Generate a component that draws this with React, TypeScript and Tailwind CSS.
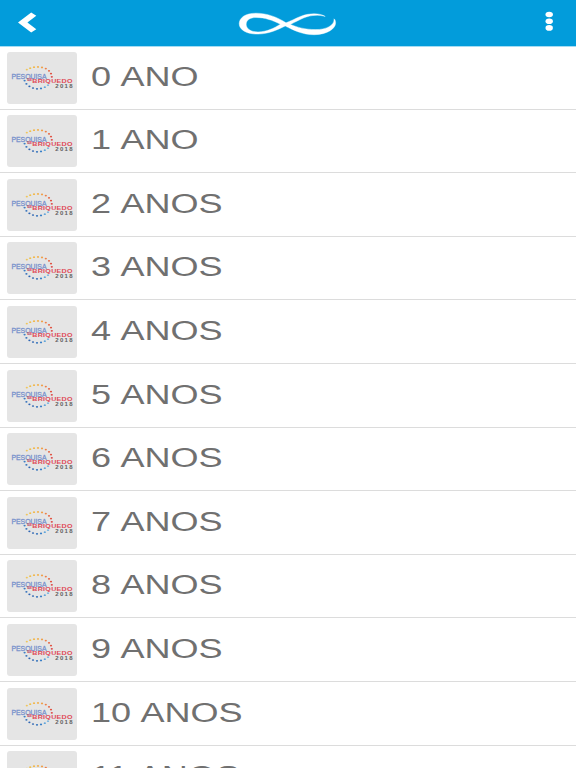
import React from "react";

const labels = [
  "0 ANO", "1 ANO", "2 ANOS", "3 ANOS", "4 ANOS", "5 ANOS",
  "6 ANOS", "7 ANOS", "8 ANOS", "9 ANOS", "10 ANOS", "11 ANOS",
];

type Dot = [number, number, string];

// Upper arc runs yellow to red, lower arc runs light to dark blue.
const dots: Dot[] = [
  [19.8, 17.6, "#efc65c"], [23.2, 16.2, "#efc04e"], [27, 15.2, "#f2b84a"], [31, 14.9, "#f2b04a"],
  [35, 15.4, "#f0a04a"], [38.8, 16.6, "#ee8048"], [42, 18.8, "#e66440"],
  [44, 21.6, "#e2503e"], [44.8, 24.8, "#dc4444"],
  [17.6, 28.6, "#3d7fc4"], [19.4, 31.8, "#3673bd"], [22.4, 34.3, "#2f66b3"], [26, 36, "#2f66b3"],
  [30, 36.8, "#2f6fbb"], [34, 36.4, "#3a80c8"], [37.8, 35.2, "#62a6da"], [41, 33.2, "#80b8e0"],
];

function Thumb() {
  return (
    <div className="h-[52px] w-[70px] shrink-0 rounded-[3px] bg-[#e5e5e5]">
      <svg viewBox="0 0 70 52" className="block h-full w-full" fontFamily="'Liberation Sans', Arial, sans-serif">
        {dots.map(([x, y, c], i) => (
          <ellipse key={i} cx={x} cy={y} rx="1.1" ry="0.85" fill={c} />
        ))}
        <text transform="translate(4.4 26.5) scale(1.3 1)" fontSize="6.4" fill="#7590cb" stroke="#7590cb" strokeWidth="0.25" textLength="27" lengthAdjust="spacingAndGlyphs">PESQUISA</text>
        <text x="20.3" y="29.3" fontSize="2.8" fontWeight="700" fill="#e04b58" textLength="4.8" lengthAdjust="spacingAndGlyphs">DE</text>
        <text transform="translate(25.3 31.3) scale(1.3 1)" fontSize="5.5" fontWeight="700" fill="#e04b58" textLength="31" lengthAdjust="spacing">BRIQUEDO</text>
        <text transform="translate(48.3 36.1) scale(1.25 1)" fontSize="4.8" fontWeight="700" fill="#606060" textLength="13.8" lengthAdjust="spacing">2018</text>
      </svg>
    </div>
  );
}

export default function App() {
  return (
    <div className="h-[768px] w-[576px] overflow-hidden bg-white font-['Liberation_Sans',Arial,sans-serif]">
      <header className="flex h-[46px] items-center justify-between bg-[#029cdb] shadow-[0_1px_0_#a5dcf3]">
        <svg className="h-[46px] w-[60px]" viewBox="0 0 60 46">
          <path d="M31.2 12.6 L36.3 15.8 L27.4 22.5 L36.3 29.2 L31.2 32.5 L18 22.5 Z" fill="#fff" />
        </svg>
        <svg className="ml-[4px] h-[46px] w-[120px]" viewBox="0 0 120 46">
          <path
            fill="#fff"
            stroke="#fff"
            strokeWidth="0.4"
            d="M95.2 16.4 C90 13 80 12.8 71 16.2 C65 18.5 60 21.4 56 22.8 C47 17 37 13.2 26 13.2 C15 13.2 9.2 17.9 9.2 23.7 C9.2 30 17 34.3 28 34.1 C39 33.8 47 30 55.2 26 C64 30.4 73 34.9 84.5 34.7 C97 34.5 105.8 28.8 105.6 22.7 C105.5 21 105.1 19.6 104 18.8 C104.8 25.4 96 29.7 85.5 29.6 C75 29.4 67.5 27.4 60.4 24.4 C65.4 22 69.4 19.8 74 17.8 C81 15 89 14.6 95.2 16.4 Z M50.4 24.2 C43.5 28.3 37 31.8 28 31.9 C20 31.9 16.2 28.3 16.2 24.3 C16.2 20 20.3 17.5 26 17.5 C35 17.5 42.5 20.3 50.4 24.2 Z"
          />
        </svg>
        <svg className="h-[46px] w-[60px]" viewBox="0 0 60 46">
          <ellipse cx="33.2" cy="14.5" rx="3.7" ry="2.8" fill="#fff" />
          <ellipse cx="33.2" cy="21.2" rx="3.7" ry="2.8" fill="#fff" />
          <ellipse cx="33.2" cy="27.9" rx="3.7" ry="2.8" fill="#fff" />
        </svg>
      </header>
      <ul>
        {labels.map((label) => (
          <li key={label} className="flex h-[63.6px] items-start border-b border-[#dcdcdc] pl-[7px] pt-[5.6px]">
            <Thumb />
            <span className="ml-[14px] mt-[5px] origin-left scale-x-[1.335] whitespace-nowrap text-[27px] leading-[40px] text-[#707070] [word-spacing:1px]">
              {label}
            </span>
          </li>
        ))}
      </ul>
    </div>
  );
}
